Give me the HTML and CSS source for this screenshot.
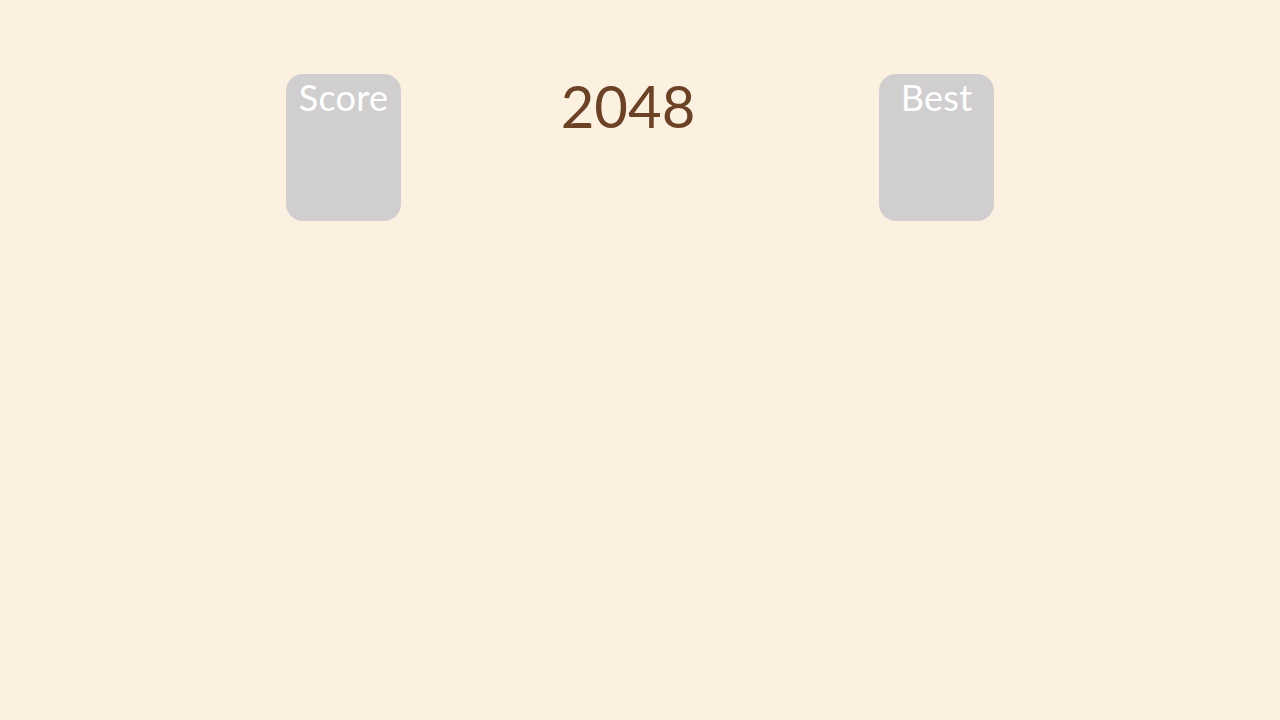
FILE: index.html
```html
<!DOCTYPE html>
<html>
<head>
<meta charset="utf-8">
<link rel="stylesheet" href="styles.css">
</head>
<body>
<div class="header">
  <div class="box"><div class="box-label">Score</div></div>
  <h1 class="title">2048</h1>
  <div class="box"><div class="box-label">Best</div></div>
</div>
</body>
</html>
```
FILE: styles.css
```css
html, body {
  margin: 0;
  padding: 0;
  background: #fcf0e1;
  height: 100%;
}
body {
  font-family: Lato, "Noto Sans", sans-serif;
}
.header {
  width: 708px;
  margin: 0 auto;
  padding-top: 74px;
  display: grid;
  grid-template-columns: 115px 1fr 115px;
  align-items: start;
}
.box {
  height: 147px;
  background: #d0cecf;
  border-radius: 17px;
  display: flex;
  justify-content: center;
}
.box-label {
  color: #ffffff;
  font-size: 36px;
  line-height: 46px;
  letter-spacing: 0.3px;
}
.title {
  margin: 0;
  padding-right: 24px;
  text-align: center;
  color: #6b4226;
  font-weight: 400;
  font-size: 58px;
  line-height: 64px;
}
```
